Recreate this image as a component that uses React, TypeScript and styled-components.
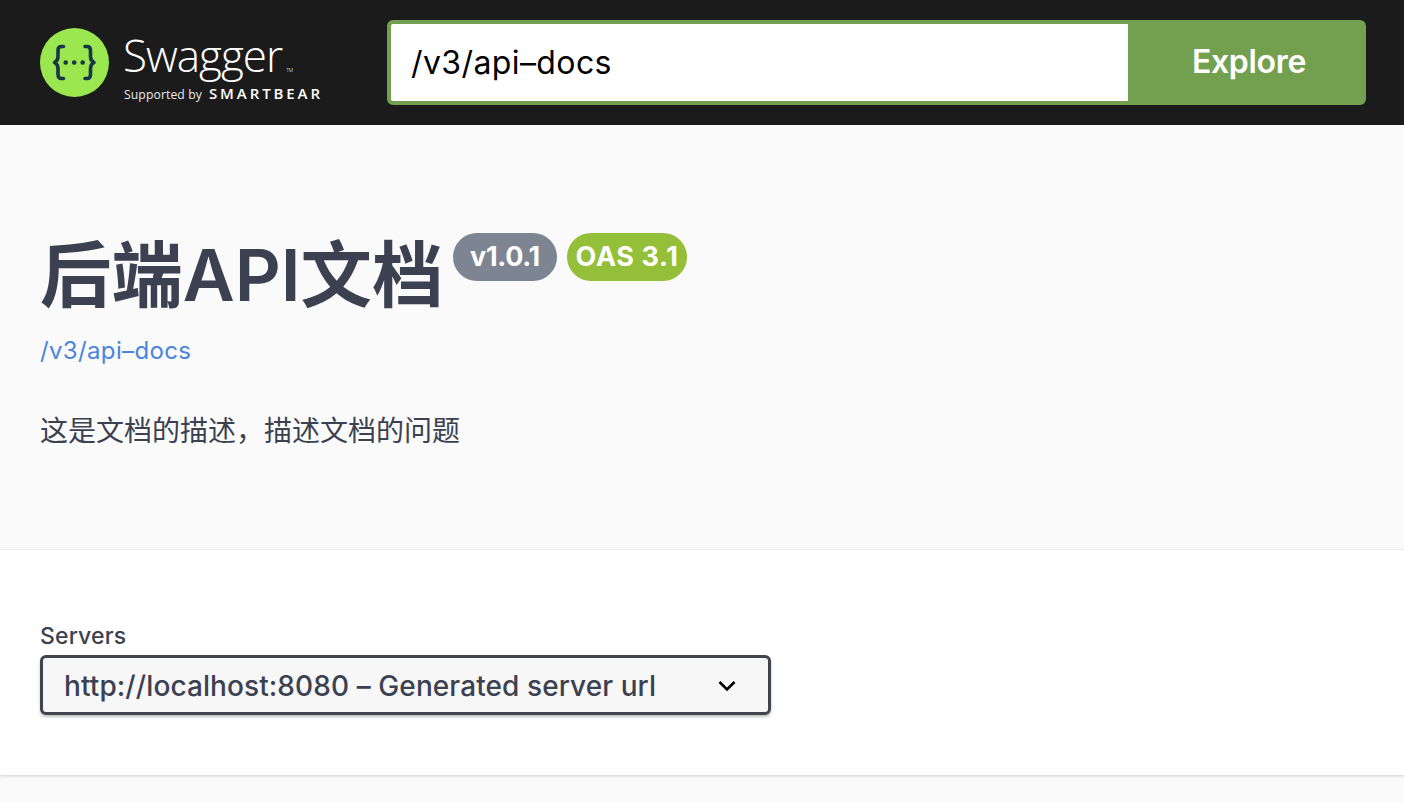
import React from 'react';
import styled, { createGlobalStyle } from 'styled-components';

const GlobalStyle = createGlobalStyle`
  html, body {
    margin: 0;
    padding: 0;
    height: 100%;
    overflow: hidden;
    background: #fafafa;
  }
  body {
    font-family: "Inter", "Noto Sans CJK SC", sans-serif;
    color: #3b4151;
  }
`;

const Topbar = styled.header`
  height: 125px;
  box-sizing: border-box;
  background: #1b1b1b;
  padding: 20px 38px 20px 40px;
  display: flex;
  align-items: flex-start;
`;

const Logo = styled.div`
  display: flex;
  align-items: center;
  gap: 15px;
  width: 347px;
  height: 85px;
  flex: none;
`;

const LogoWords = styled.div`
  display: flex;
  flex-direction: column;
  color: #fff;
  font-family: "Open Sans", sans-serif;
  padding-top: 6px;
`;

const LogoName = styled.div`
  font-size: 44px;
  line-height: 50px;
  font-weight: 300;
  letter-spacing: -1px;
  height: 54px;
  margin-left: -1px;
  display: flex;
  align-items: flex-start;
`;

const Tm = styled.span`
  font-size: 5px;
  line-height: 5px;
  letter-spacing: 0;
  margin: 38px 0 0 4px;
`;

const LogoSub = styled.div`
  display: flex;
  align-items: baseline;
  gap: 7px;
  height: 18px;
  line-height: 18px;
  white-space: nowrap;
`;

const SupportedBy = styled.span`
  font-size: 12.2px;
  color: #e8e8e8;
  letter-spacing: 0.1px;
`;

const Bear = styled.span`
  font-size: 15px;
  font-weight: 600;
  letter-spacing: 2.9px;
`;

const SearchForm = styled.div`
  flex: 1;
  display: flex;
  height: 85px;
  box-sizing: border-box;
  border: 4px solid #72a04f;
  border-radius: 6px;
  background: #72a04f;
`;

const SearchInput = styled.div`
  flex: 1;
  background: #fff;
  color: #000;
  font-size: 32px;
  line-height: 77px;
  letter-spacing: 0.4px;
  padding-left: 20px;
  border-radius: 2px 0 0 2px;
`;

const ExploreButton = styled.div`
  width: 234px;
  padding-left: 8px;
  box-sizing: border-box;
  color: #fff;
  font-size: 32px;
  font-weight: 600;
  line-height: 76px;
  text-align: center;
  letter-spacing: -0.3px;
`;

const InfoSection = styled.section`
  height: 425px;
  box-sizing: border-box;
  background: #fafafa;
  border-bottom: 1px solid #f3f3f3;
  padding: 105px 40px 0;
`;

const TitleRow = styled.div`
  display: flex;
  align-items: flex-start;
  gap: 10px;
  height: 100px;
`;

const Title = styled.h1`
  margin: 0 2px 0 0;
  width: 401px;
  font-size: 71.4px;
  line-height: 90px;
  font-weight: 600;
  color: #3b4151;
  white-space: nowrap;
`;

const Badge = styled.span<{ $bg: string; $width: number; $track: number }>`
  width: ${(p) => p.$width}px;
  height: 48px;
  margin-top: 3px;
  border-radius: 24px;
  background: ${(p) => p.$bg};
  color: #fff;
  font-size: 27px;
  font-weight: 700;
  line-height: 48px;
  text-align: center;
  white-space: nowrap;
  letter-spacing: ${(p) => p.$track}px;
`;

const BaseLink = styled.a`
  display: block;
  margin-top: 4px;
  font-size: 24px;
  line-height: 34px;
  letter-spacing: 0.35px;
  color: #4a85dd;
  text-decoration: none;
`;

const Description = styled.p`
  margin: 45px 0 0;
  font-size: 28px;
  line-height: 36px;
  color: #3b4151;
`;

const ServersSection = styled.section`
  height: 225px;
  box-sizing: border-box;
  background: #fff;
  box-shadow: 0 1px 3px rgba(0, 0, 0, 0.18);
  padding: 70px 40px 0;
`;

const ServersLabel = styled.div`
  font-size: 23px;
  line-height: 32px;
  font-weight: 500;
  letter-spacing: 0.15px;
  color: #3b4151;
`;

const ServerSelect = styled.div`
  margin-top: 3px;
  width: 731px;
  height: 60px;
  box-sizing: border-box;
  border: 3px solid #41444e;
  border-radius: 6px;
  background: #f7f7f7;
  box-shadow: 0 2px 3px rgba(0, 0, 0, 0.25);
  padding: 1px 31px 0 21px;
  display: flex;
  align-items: center;
  justify-content: space-between;
  font-size: 28px;
  font-weight: 500;
  letter-spacing: 0.09px;
  color: #3b4151;
  white-space: nowrap;
`;

function SwaggerMark() {
  return (
    <svg width="69" height="69" viewBox="0 0 69 69">
      <circle cx="34.5" cy="34.5" r="34.5" fill="#9be74f" />
      <g fill="none" stroke="#173647" strokeWidth="3.6" strokeLinecap="round" strokeLinejoin="round">
        <path d="M23.5 18.500h-2c-2.500 0-3.500 1.500-3.500 4v6c0 3-1.500 5-3.500 6 2 1 3.500 3 3.500 6v6c0 2.500 1 4 3.500 4h2" />
        <path d="M45 18.500h2c2.500 0 3.500 1.500 3.500 4v6c0 3 1.500 5 3.500 6-2 1-3.500 3-3.500 6v6c0 2.500-1 4-3.500 4h-2" />
      </g>
      <g fill="#173647">
        <circle cx="25.700" cy="34.500" r="2.300" />
        <circle cx="34.200" cy="34.500" r="2.300" />
        <circle cx="42.700" cy="34.500" r="2.300" />
      </g>
    </svg>
  );
}

function Chevron() {
  return (
    <svg width="20" height="20" viewBox="0 0 20 20" fill="none" stroke="#000" strokeWidth="2.600">
      <path d="M2.500 6l7.500 7.500L17.500 6" />
    </svg>
  );
}

export default function App() {
  return (
    <>
      <GlobalStyle />
      <Topbar>
        <Logo>
          <SwaggerMark />
          <LogoWords>
            <LogoName>
              Swagger<Tm>TM</Tm>
            </LogoName>
            <LogoSub>
              <SupportedBy>Supported by</SupportedBy>
              <Bear>SMARTBEAR</Bear>
            </LogoSub>
          </LogoWords>
        </Logo>
        <SearchForm>
          <SearchInput>/v3/api–docs</SearchInput>
          <ExploreButton>Explore</ExploreButton>
        </SearchForm>
      </Topbar>
      <InfoSection>
        <TitleRow>
          <Title>后端API文档</Title>
          <Badge $bg="#7d8492" $width={104} $track={-0.3}>v1.0.1</Badge>
          <Badge $bg="#94bf38" $width={120} $track={0.6}>OAS 3.1</Badge>
        </TitleRow>
        <BaseLink href="#">/v3/api–docs</BaseLink>
        <Description>这是文档的描述，描述文档的问题</Description>
      </InfoSection>
      <ServersSection>
        <ServersLabel>Servers</ServersLabel>
        <ServerSelect>
          <span>http://localhost:8080 – Generated server url</span>
          <Chevron />
        </ServerSelect>
      </ServersSection>
    </>
  );
}
